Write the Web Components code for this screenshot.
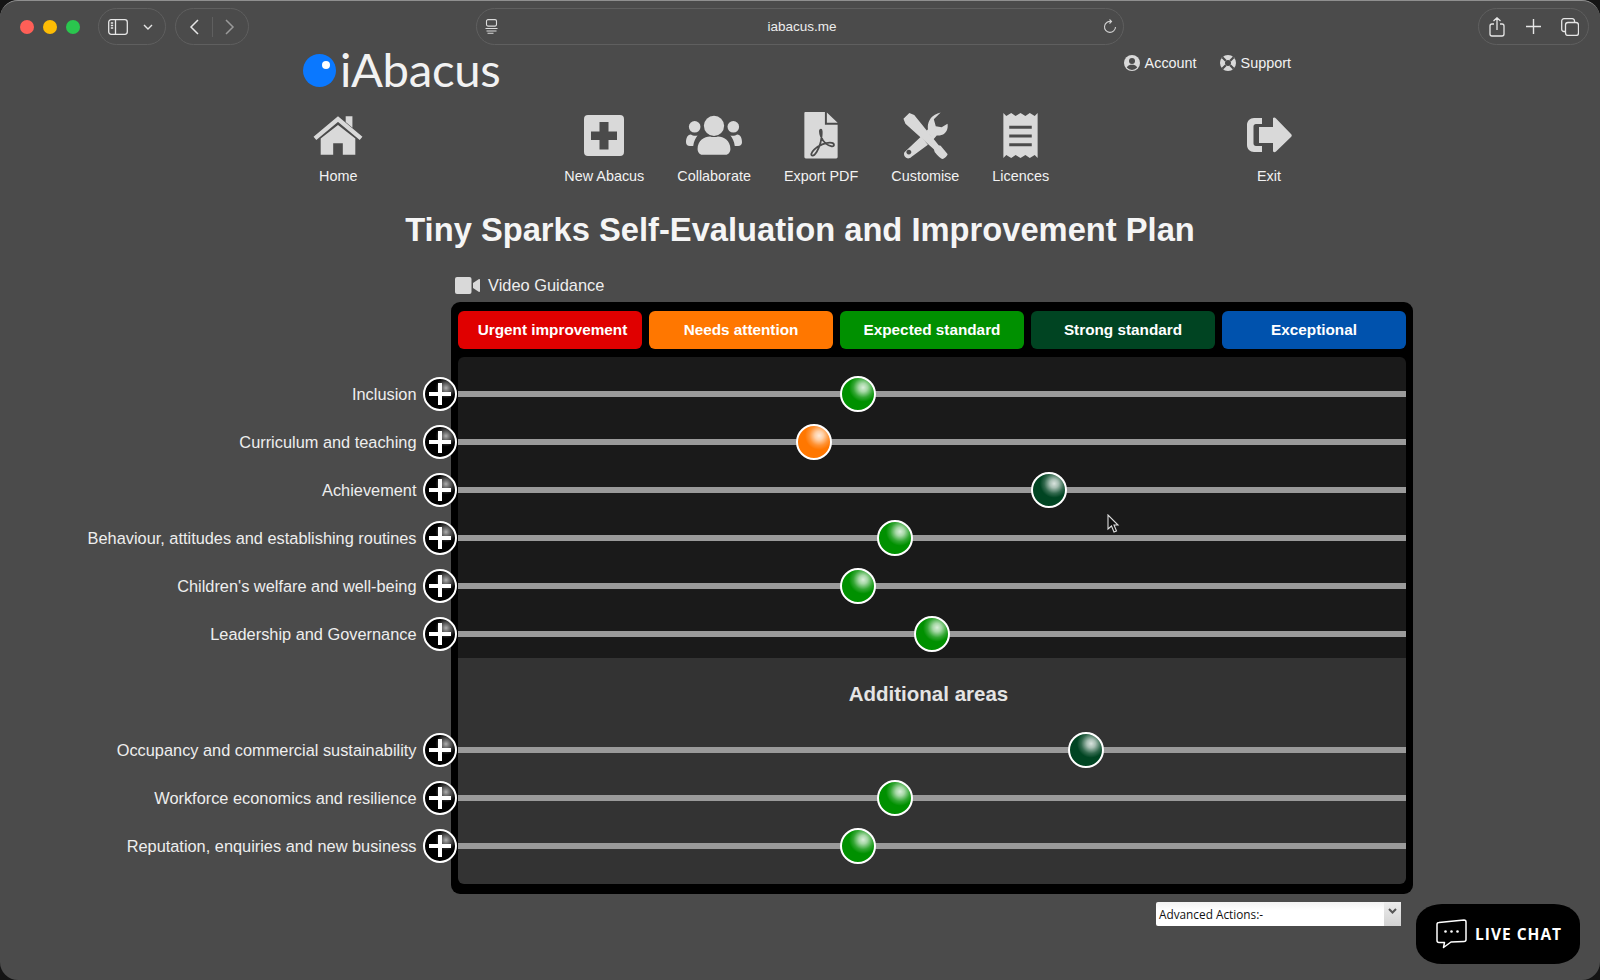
<!DOCTYPE html>
<html lang="en"><head><meta charset="utf-8"><title>iAbacus</title>
<style>
html,body{margin:0;padding:0;background:#141414;width:1600px;height:980px;overflow:hidden}
body{font-family:"Liberation Sans",Arial,sans-serif;color:#fff}
</style></head><body>
<ia-window>
  <ia-toolbar></ia-toolbar>
  <ia-header></ia-header>
  <ia-nav>
    <ia-nav-item icon="home" label="Home"></ia-nav-item>
    <ia-nav-group>
      <ia-nav-item icon="plus" label="New Abacus"></ia-nav-item>
      <ia-nav-item icon="users" label="Collaborate"></ia-nav-item>
      <ia-nav-item icon="pdf" label="Export PDF"></ia-nav-item>
      <ia-nav-item icon="tools" label="Customise"></ia-nav-item>
      <ia-nav-item icon="receipt" label="Licences"></ia-nav-item>
    </ia-nav-group>
    <ia-nav-item icon="exit" label="Exit"></ia-nav-item>
  </ia-nav>
  <ia-title>Tiny Sparks Self-Evaluation and Improvement Plan</ia-title>
  <ia-video>Video Guidance</ia-video>
  <ia-board>
    <ia-scale>
      <ia-pill color="#e00000" nudge="5">Urgent improvement</ia-pill>
      <ia-pill color="#ff7700">Needs attention</ia-pill>
      <ia-pill color="#009000">Expected standard</ia-pill>
      <ia-pill color="#004422">Strong standard</ia-pill>
      <ia-pill color="#0052ad">Exceptional</ia-pill>
    </ia-scale>
    <ia-band>
      <ia-row label="Inclusion" at="400" color="#009000"></ia-row>
      <ia-row label="Curriculum and teaching" at="356" color="#ff7700"></ia-row>
      <ia-row label="Achievement" at="591" color="#004422"></ia-row>
      <ia-row label="Behaviour, attitudes and establishing routines" at="437" color="#009000"></ia-row>
      <ia-row label="Children's welfare and well-being" at="400" color="#009000"></ia-row>
      <ia-row label="Leadership and Governance" at="474" color="#009000"></ia-row>
    </ia-band>
    <ia-band kind="extra" heading="Additional areas">
      <ia-row label="Occupancy and commercial sustainability" at="628" color="#004422"></ia-row>
      <ia-row label="Workforce economics and resilience" at="437" color="#009000"></ia-row>
      <ia-row label="Reputation, enquiries and new business" at="400" color="#009000"></ia-row>
    </ia-band>
  </ia-board>
  <ia-actions>Advanced Actions:-</ia-actions>
  <ia-chat>LIVE CHAT</ia-chat>
  <ia-cursor></ia-cursor>
</ia-window>
<script>
const ICONS={
home:`<svg width="50" height="41" viewBox="0 0 52 42"><path fill="#d9d9d9" d="M34 1h7v12l-7-6zM8 24 26 10l18 14v17H31V29H21v12H8z"/><path fill="none" stroke="#d9d9d9" stroke-width="4.500" d="M2 24 26 4l24 20"/></svg>`,
plus:`<svg width="40" height="41" viewBox="0 0 40 41"><path fill="#d9d9d9" fill-rule="evenodd" d="M4 0h32a4 4 0 0 1 4 4v33a4 4 0 0 1-4 4H4a4 4 0 0 1-4-4V4a4 4 0 0 1 4-4zM15.500 7v9.500H7v8.500h8.500v9.500h9V25H33v-8.500h-8.500V7z"/></svg>`,
users:`<svg width="56" height="41" viewBox="0 0 58 42"><g fill="#d9d9d9"><circle cx="29" cy="11" r="10.500"/><circle cx="9" cy="12" r="6"/><circle cx="49" cy="12" r="6"/><path d="M12 35c0-9 7-13 13-13 1.500.8 6.500.8 8 0 6 0 13 4 13 13 0 3-2 6-5 6H17c-3 0-5-3-5-6z"/><path d="M12 21c-2 2.500-4 6-4.500 11H4c-2.500 0-4-1.500-4-4 0-5 2-8 5-8 2 1.500 5 1.500 7 1zM46 21c2 2.500 4 6 4.500 11H54c2.500 0 4-1.500 4-4 0-5-2-8-5-8-2 1.500-5 1.500-7 1z"/></g></svg>`,
pdf:`<svg width="34" height="47" viewBox="0 0 34 48"><path fill="#d9d9d9" d="M1 0h20v13h13v33a1.500 1.500 0 0 1-1.500 1.500h-31A1.500 1.500 0 0 1 0 46V1a1 1 0 0 1 1-1zM23 0.500 34 11H23z"/><path fill="none" stroke="#4b4b4b" stroke-width="1.800" stroke-linejoin="round" d="M17 18c-1.500 0-1.500 3 0 7 2 5 6 9 11 10 3 .5 3-3 0-3.500-6-1-14 3-18 7-3 3-4 6-1.500 6s6-6 8-13c1-4 2-13.500 .5-13.500z"/></svg>`,
tools:`<svg width="46" height="47" viewBox="0 0 46 48"><g fill="#d9d9d9"><path d="M1 7 7 1l5 2 25 31 2 .5 7 8.500c.5 1-3 5-5 5s-8-7-8-7l-1-3L3 12z"/><path d="M46 12c1 6-2 11-8 12l-3 0-3.500 4-7-8.500 1.500-2c-1-7 3-15 13-17l-7 7 2 7 6 1zM19 25l7 8.500L9 46c-4 4-9-1-7-5zM6.500 38.500a2.500 2.500 0 1 0 .01 0z" fill-rule="evenodd"/></g></svg>`,
receipt:`<svg width="35" height="47" viewBox="0 0 35 48"><path fill="#d9d9d9" fill-rule="evenodd" d="M0 1l3 3 5-3 4.500 3 5-3 5 3 4.500-3 5 3 3-3v46l-3-3-5 3-4.500-3-5 3-5-3-4.500 3-5-3-3 3zM6 14v3h23v-3zM6 23v3h23v-3zM6 32v3h23v-3z"/></svg>`,
exit:`<svg width="45" height="36" viewBox="0 0 45 36"><g fill="#d9d9d9"><path d="M7 1h8v6H9c-1.500 0-2.500 1-2.500 2.500v17C6.500 28 7.500 29 9 29h6v6H7c-4 0-7-3-7-7V8c0-4 3-7 7-7z"/><path d="M26 1c1-1 2-.5 3 .5L44 17c1 1 1 2 0 3L29 34.500c-1 1-3 1-3-.5v-8H12V10h14z"/></g></svg>`
};
function def(name,css,html,extra){
  customElements.define(name,class extends HTMLElement{
    constructor(){super();this.attachShadow({mode:"open"});}
    connectedCallback(){
      const a=n=>this.getAttribute(n)||"";
      this.shadowRoot.innerHTML=`<style>${css}</style>`+(typeof html==="function"?html(a):html);
      if(extra)extra(this,a);
    }
  });
}
def("ia-window",`:host{display:block;position:relative;width:1600px;height:980px;background:#4b4b4b;border-radius:18px;overflow:hidden;box-sizing:border-box;border-top:1px solid #8f8f8f}`,`<slot></slot>`);

const pg=`display:flex;align-items:center;height:37px;border:1px solid #5f5f5f;border-radius:19px;box-sizing:border-box;flex:none`;
def("ia-toolbar",`:host{display:flex;align-items:center;height:51px;padding:0 10px 0 20px;box-sizing:border-box;font-family:Inter,"Liberation Sans",sans-serif}
.l{width:14px;height:14px;border-radius:50%;flex:none}
.lights{display:flex;gap:9px;margin-right:18px}
.g1{${pg};width:68px;margin-right:9px;padding-left:9px;gap:15px}
.g2{${pg};width:74px;margin-right:227px;justify-content:space-between;padding:0 13px}
.sep{width:1px;height:20px;background:#5f5f5f}
.url{${pg};width:648px;justify-content:space-between;padding:0 6px 0 8px;margin-right:354px;position:relative}
.url span{position:absolute;left:4px;right:0;text-align:center;font-size:13.500px;color:#ededed;font-family:"Liberation Sans",sans-serif}
.g3{${pg};width:111px;justify-content:space-between;padding:0 9px 0 10px}
svg{display:block;flex:none}`,
`<div class="lights"><div class="l" style="background:#ff5f57"></div><div class="l" style="background:#fdbc05"></div><div class="l" style="background:#2ac64e"></div></div>
<div class="g1"><svg width="20" height="16" viewBox="0 0 20 16" fill="none" stroke="#e6e6e6" stroke-width="1.300"><rect x=".7" y=".7" width="18.600" height="14.600" rx="2.500"/><path d="M7.500 1v14M2.800 4h2.400M2.800 6.500h2.400M2.800 9h2.400"/></svg><svg width="10" height="6" viewBox="0 0 10 6" fill="none" stroke="#e6e6e6" stroke-width="1.400"><path d="M1 1l4 4 4-4"/></svg></div>
<div class="g2"><svg width="10" height="16" viewBox="0 0 10 16" fill="none" stroke="#e6e6e6" stroke-width="1.500"><path d="M9 1 2 8l7 7"/></svg><div class="sep"></div><svg width="10" height="16" viewBox="0 0 10 16" fill="none" stroke="#9a9a9a" stroke-width="1.500"><path d="m1 1 7 7-7 7"/></svg></div>
<div class="url"><svg width="13" height="15" viewBox="0 0 13 15" fill="none" stroke="#dcdcdc" stroke-width="1.100"><rect x="1.500" y=".6" width="10" height="6.500" rx="1.500"/><path d="M.5 9.500h12M1.500 12h10M2.500 14.300h6"/></svg><span>iabacus.me</span><svg width="14" height="15" viewBox="0 0 14 15" fill="none" stroke="#cfcfcf" stroke-width="1.100"><path d="M8 2.500A5.500 5.500 0 1 0 12.500 8M6.500 .5 8.500 2.500 6.500 4.500"/></svg></div>
<div class="g3"><svg width="16" height="20" viewBox="0 0 16 20" fill="none" stroke="#e6e6e6" stroke-width="1.300"><path d="M5 7H3a2 2 0 0 0-2 2v8a2 2 0 0 0 2 2h10a2 2 0 0 0 2-2V9a2 2 0 0 0-2-2h-2M8 13V1M4.500 4 8 .8 11.500 4"/></svg><svg width="15" height="15" viewBox="0 0 15 15" fill="none" stroke="#e6e6e6" stroke-width="1.400"><path d="M7.500 0v15M0 7.500h15"/></svg><svg width="18" height="18" viewBox="0 0 18 18" fill="none" stroke="#e6e6e6" stroke-width="1.300"><rect x="4.500" y="4.500" width="13" height="13" rx="2.500"/><path d="M4.500 13.500H3a2.300 2.300 0 0 1-2.300-2.300V3A2.300 2.300 0 0 1 3 .7h8A2.300 2.300 0 0 1 13.500 3v1.500"/></svg></div>`);

def("ia-header",`:host{display:flex;justify-content:space-between;height:57px;padding:0 309px 0 303px;box-sizing:border-box}
.logo{display:flex;align-items:flex-start;gap:4px;padding-top:2px}
.ball{width:33px;height:33px;border-radius:50%;background:#0a78ff;position:relative;flex:none}
.ball i{position:absolute;left:19px;top:7px;width:8px;height:8px;border-radius:50%;background:#fff}
.name{font:400 47.300px/35px Lato,"Liberation Sans",sans-serif;color:#f2f2f2;letter-spacing:-.3px;margin-top:-3px}
.links{display:flex;gap:23px;padding-top:2px;font-size:14.400px;line-height:18px}
.link{display:flex;align-items:center;gap:5px;color:#f2f2f2;height:18px}
svg{display:block}`,
`<div class="logo"><div class="ball"><i></i></div><div class="name">iAbacus</div></div>
<div class="links"><div class="link"><svg width="16" height="16" viewBox="0 0 16 16"><circle cx="8" cy="8" r="8" fill="#d9d9d9"/><circle cx="8" cy="6" r="3" fill="#4b4b4b"/><path d="M2.800 12.500C4 10.300 6 9.800 8 9.800s4 .5 5.200 2.700A7 7 0 0 1 8 15a7 7 0 0 1-5.200-2.500z" fill="#4b4b4b"/></svg><span>Account</span></div>
<div class="link"><svg width="16" height="16" viewBox="0 0 16 16"><circle cx="8" cy="8" r="8" fill="#d9d9d9"/><path d="M2.300 2.300l3.500 3.500M13.700 2.300l-3.500 3.500M2.300 13.700l3.500-3.500M13.700 13.700l-3.500-3.500" stroke="#4b4b4b" stroke-width="2.200"/><circle cx="8" cy="8" r="3" fill="#4b4b4b"/></svg><span>Support</span></div></div>`);

def("ia-nav",`:host{display:flex;justify-content:space-between;padding:0 319px 0 319px;box-sizing:border-box;height:101px}`,`<slot></slot>`);
def("ia-nav-group",`:host{display:flex;gap:33px;margin:0 .5px 0 -.5px}`,`<slot></slot>`);
def("ia-nav-item",`:host{display:flex;flex-direction:column;align-items:center;font-size:14.400px;line-height:18px;color:#f2f2f2;white-space:nowrap}
.i{height:58px;box-sizing:border-box;padding-bottom:6px;display:flex;align-items:center;justify-content:center;width:0}
svg{display:block;flex:none}`,a=>`<div class="i">${ICONS[a("icon")]}</div><span>${a("label")}</span>`);

def("ia-title",`:host{display:block;height:40px;text-align:center;font-weight:700;font-size:32.700px;line-height:40px;color:#f5f5f5}`,`<slot></slot>`);
def("ia-video",`:host{display:flex;align-items:center;gap:8px;height:24px;margin:23px 0 5px 455px;font-size:16.400px;color:#eee}
svg{display:block}`,`<svg width="25" height="17" viewBox="0 0 25 17"><rect width="16.500" height="17" rx="2" fill="#d9d9d9"/><path d="M18 6l6-4c.5 0 1 .3 1 1v11c0 .7-.5 1-1 1l-6-4z" fill="#d9d9d9"/></svg><slot></slot>`);

def("ia-board",`:host{display:block;margin-left:451px;width:962px;height:592px;box-sizing:border-box;background:#000;border-radius:9px;padding:9px 7px 10px}
::slotted(ia-scale){margin-bottom:8px}`,`<slot></slot>`);
def("ia-scale",`:host{display:flex;gap:7px}`,`<slot></slot>`);
def("ia-pill",`:host{display:flex;align-items:center;justify-content:center;width:184px;height:38px;box-sizing:border-box;border-radius:6px;font-weight:700;font-size:15.300px;color:#fff}`,
a=>`<style>:host{background:${a("color")};padding-left:${a("nudge")||0}px}</style><slot></slot>`);
def("ia-band",`:host{display:block;background:#1a1a1a;padding:13px 0 0;border-radius:6px 6px 0 0}
:host([kind=extra]){background:#333;padding:24px 0 14px;border-radius:0 0 6px 6px}
h2{margin:0 7px 20px 0;text-align:center;font-size:20.500px;line-height:24px;font-weight:700;color:#e4e4e4}`,
a=>(a("heading")?`<h2>${a("heading")}</h2>`:"")+`<slot></slot>`);

def("ia-row",`:host{display:flex;align-items:center;height:48px;margin-left:-458px;color:#eee;font-size:16.350px}
.lab{width:416.500px;text-align:right;white-space:nowrap;flex:none}
.add{width:34px;height:34px;margin:0 1px 0 6.500px;box-sizing:border-box;flex:none;border-radius:50%;border:2px solid #fff;background:radial-gradient(circle at 70% 30%,#b0b0b0 0,#777 10%,#2a2a2a 26%,#000 36%);display:flex;align-items:center;justify-content:center;position:relative;z-index:1}
.add svg{display:block}
.track{flex:1;height:6px;background:#9a9a9a;position:relative}
.knob{position:absolute;top:50%;width:36px;height:36px;margin:-18px 0 0 -18px;box-sizing:border-box;border-radius:50%;border:2px solid #fff}`,
a=>`<div class="lab">${a("label")}</div>
<div class="add"><svg width="22" height="22" viewBox="0 0 22 22"><path fill="#fff" d="M9 0h4v9h9v4h-9v9H9v-9H0V9h9z"/></svg></div>
<div class="track"><div class="knob" style="left:${a("at")}px;background:radial-gradient(circle at 66% 30%,rgba(255,255,255,.85) 0,rgba(255,255,255,.65) 14%,rgba(255,255,255,.2) 32%,rgba(255,255,255,0) 46%),${a("color")}"></div></div>`);

def("ia-actions",`:host{display:flex;align-items:center;width:245px;height:24px;margin:8px 0 0 1156px;background:linear-gradient(#f2f2f2,#fff 35%);border-radius:2px;box-sizing:border-box;color:#111;font:11.800px "Open Sans","Liberation Sans",sans-serif;position:relative;padding-left:3px}
.arrow{position:absolute;right:0;top:0;bottom:0;width:17px;background:linear-gradient(#ececec,#d2d2d2);display:flex;justify-content:center;padding-top:6px;box-sizing:border-box}`,
`<slot></slot><div class="arrow"><svg width="9" height="6" viewBox="0 0 9 6" fill="none" stroke="#555" stroke-width="2"><path d="M1 1l3.500 3.500L8 1"/></svg></div>`);

def("ia-chat",`:host{position:absolute;left:1416px;top:903px;width:164px;height:60px;background:#000;border-radius:26px/20px;display:flex;align-items:center;gap:8px;padding-left:20px;box-sizing:border-box;font:700 15.500px "Open Sans","Liberation Sans",sans-serif;letter-spacing:1px;color:#fff}
svg{display:block;flex:none}`,
`<svg width="31" height="30" viewBox="0 0 31 30" fill="none" stroke="#fff" stroke-width="1.500"><path d="M3 3.500 28 1c1 0 2 .8 2 2v17.500c0 1-.8 2-2 2l-13 .5-7.500 5.500 1-5H3c-1 0-2-1-2-2V5.500c0-1 1-2 2-2z" stroke-linejoin="round"/><circle cx="9.500" cy="12.500" r="1.300" fill="#fff" stroke="none"/><circle cx="15.500" cy="12.500" r="1.300" fill="#fff" stroke="none"/><circle cx="21.500" cy="12.500" r="1.300" fill="#fff" stroke="none"/></svg><slot></slot>`);

def("ia-cursor",`:host{position:absolute;left:1107px;top:513px;width:14px;height:20px}svg{display:block}`,
`<svg width="14" height="20" viewBox="0 0 14 20"><path d="M1 1v14l3.500-3 2.500 6 2.500-1-2.500-6H11z" fill="#111" stroke="#ddd" stroke-width="1.100"/></svg>`);
</script>
</body></html>
